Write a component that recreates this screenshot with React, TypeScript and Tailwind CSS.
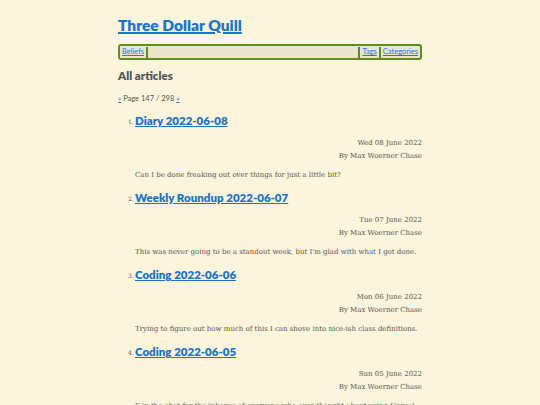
import React from 'react';

const articles = [
  { title: 'Diary 2022-06-08', date: 'Wed 08 June 2022', summary: 'Can I be done freaking out over things for just a little bit?' },
  { title: 'Weekly Roundup 2022-06-07', date: 'Tue 07 June 2022', summary: "This was never going to be a standout week, but I'm glad with what I got done." },
  { title: 'Coding 2022-06-06', date: 'Mon 06 June 2022', summary: 'Trying to figure out how much of this I can shove into nice-ish class definitions.' },
  { title: 'Coding 2022-06-05', date: 'Sun 05 June 2022', summary: 'F in the chat for the inboxes of everyone who ever thought about using Unreal.' },
];

const head = { fontFamily: 'Lato, "Open Sans", sans-serif' };
const body = { fontFamily: '"DejaVu Serif", "Liberation Serif", serif' };

const App: React.FC = () => {
  return (
    <div className="min-h-screen w-full bg-[#fcf4dc] text-[#555]">
      <div className="mx-auto w-[304px] pt-[12px]">
        <h1 style={head} className="text-[15.5px] font-extrabold leading-[26px]">
          <a href="#" className="text-[#1a73c5] underline decoration-2">Three Dollar Quill</a>
        </h1>

        {/* Nav */}
        <nav
          style={head}
          className="mt-[6px] flex h-[16px] items-center rounded-[3px] border-2 border-[#5b8e1c] bg-[#ece4cf] px-[2px] text-[7.5px] leading-none"
        >
          <a href="#" className="text-[#2a78c4] underline">Beliefs</a>
          <span className="ml-[2px] h-[11px] w-[2px] bg-[#5b8e1c]" />
          <span className="flex-1" />
          <span className="mr-[2px] h-[11px] w-[2px] bg-[#5b8e1c]" />
          <a href="#" className="text-[#2a78c4] underline">Tags</a>
          <span className="mx-[2px] h-[11px] w-[2px] bg-[#5b8e1c]" />
          <a href="#" className="text-[#2a78c4] underline">Categories</a>
        </nav>

        <h2 style={head} className="mt-[7px] text-[11.5px] font-extrabold leading-[18px] text-[#555]">All articles</h2>

        <p style={head} className="mt-[9px] text-[7.5px] leading-[10px] text-[#555]">
          <a href="#" className="text-[#2a78c4] underline">«</a> Page 147 / 298{' '}
          <a href="#" className="text-[#2a78c4] underline">»</a>
        </p>

        <ol className="mt-[9px] pl-[17px]">
          {articles.map((a, i) => (
            <li key={a.title} className="mb-[10px] flex">
              <span style={body} className="mt-[6px] w-[0px] shrink-0 text-[6px] leading-none text-[#555]">
                <span className="relative left-[-7px]">{i + 1}.</span>
              </span>
              <div className="flex-1">
                <h3 style={head} className="text-[11.5px] font-extrabold leading-[16px]">
                  <a href="#" className="text-[#1a73c5] underline">{a.title}</a>
                </h3>
                <div style={body} className="mt-[7.5px] text-right text-[7px] leading-[13px] text-[#555]">
                  <div>{a.date}</div>
                  <div>By Max Woerner Chase</div>
                </div>
                <p style={body} className="mt-[7.5px] text-[7px] leading-[10px] text-[#555]">{a.summary}</p>
              </div>
            </li>
          ))}
        </ol>
      </div>
    </div>
  );
};

export default App;
